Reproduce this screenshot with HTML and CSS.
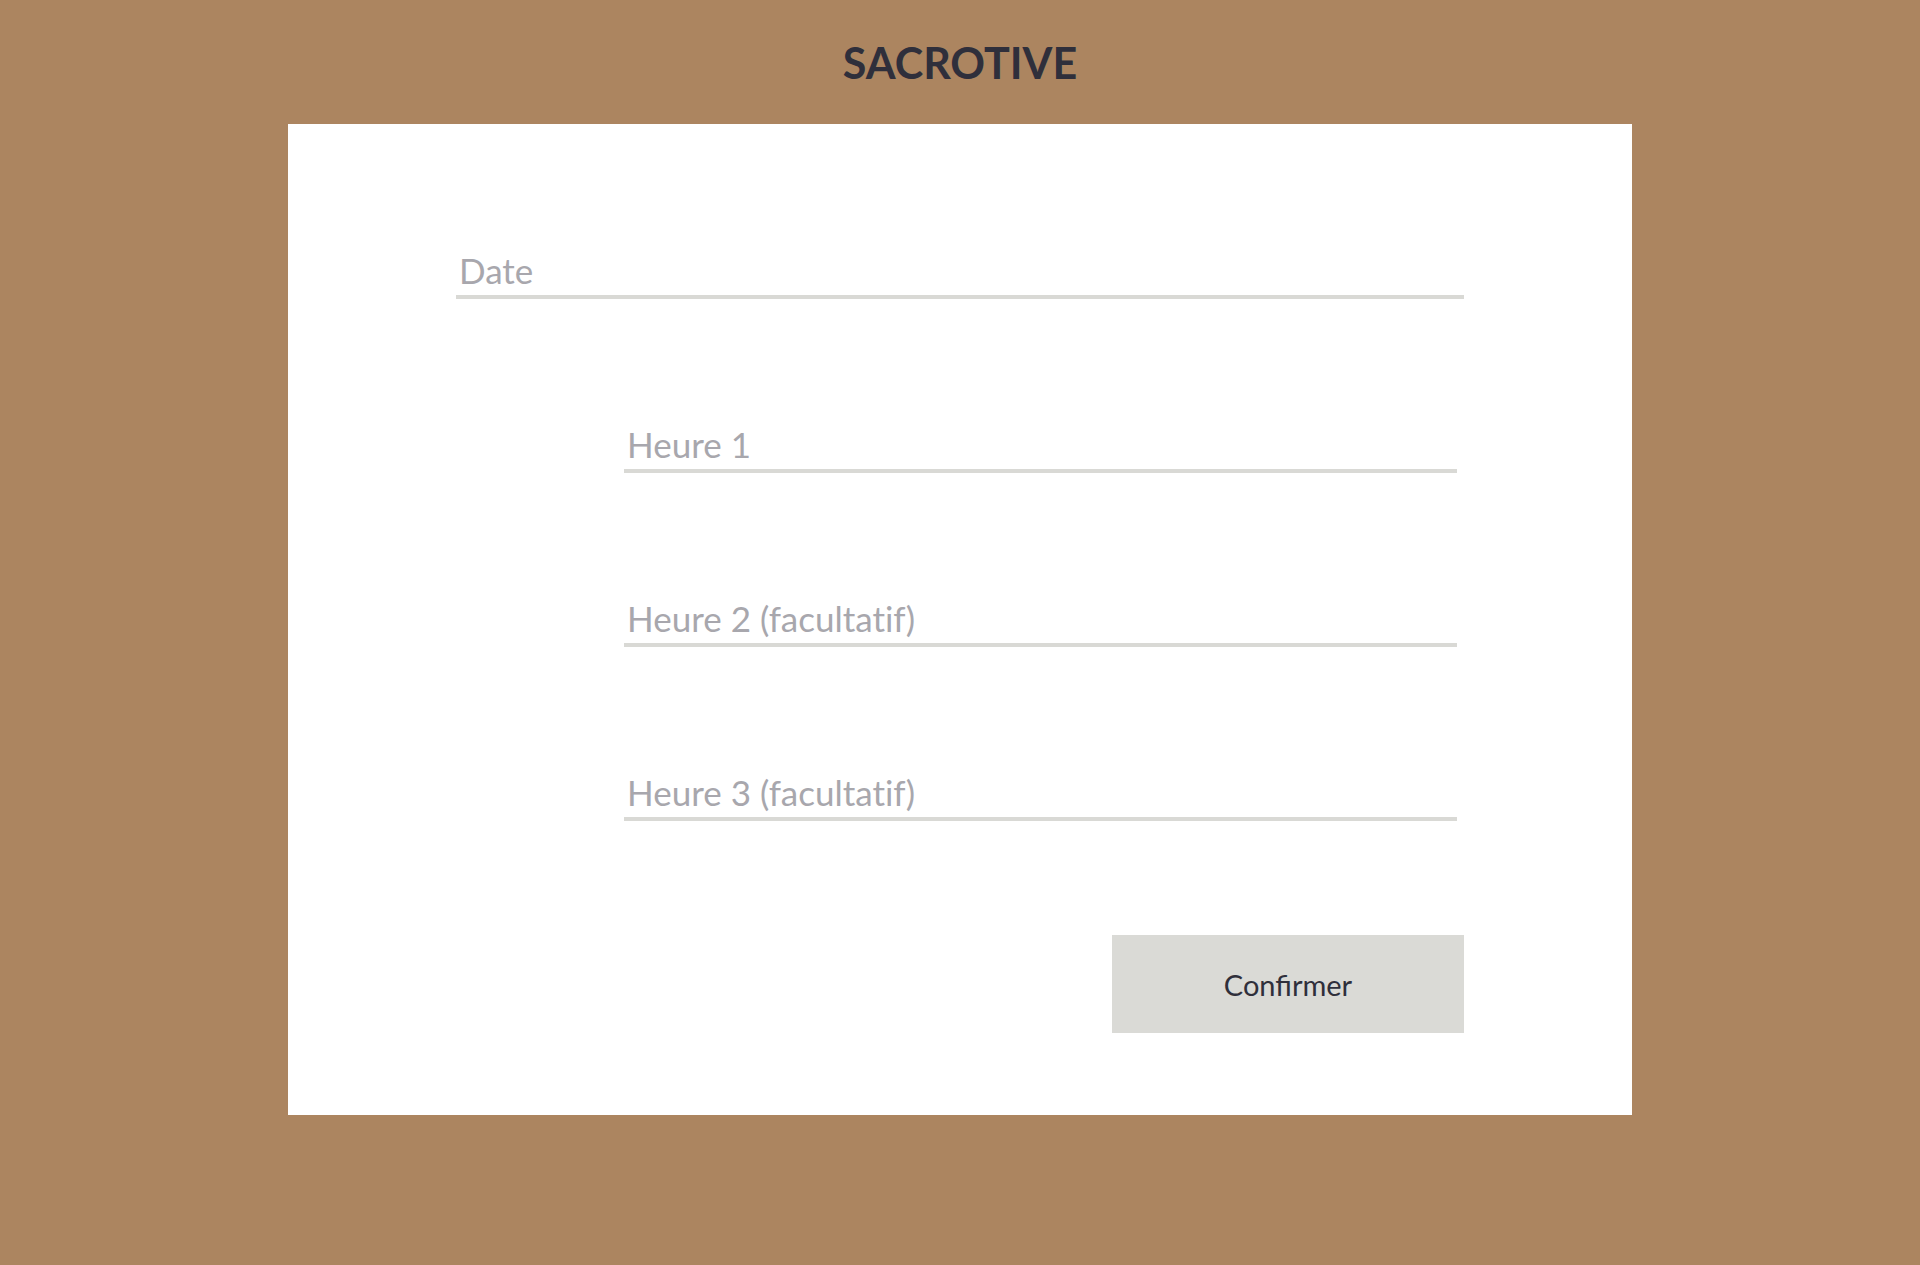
FILE: index.html
```html
<!DOCTYPE html>
<html lang="fr">
<head>
<meta charset="utf-8">
<title>SACROTIVE</title>
<link rel="stylesheet" href="styles.css">
</head>
<body>
<header class="header">
  <h1 class="title">SACROTIVE</h1>
</header>
<main class="card">
  <form class="form">
    <input class="field field-date" type="text" placeholder="Date">
    <input class="field field-time" type="text" placeholder="Heure 1">
    <input class="field field-time" type="text" placeholder="Heure 2 (facultatif)">
    <input class="field field-time" type="text" placeholder="Heure 3 (facultatif)">
    <button class="submit" type="button">Confirmer</button>
  </form>
</main>
</body>
</html>
```

FILE: styles.css
```css
html, body {
  margin: 0;
  padding: 0;
}
body {
  background: #ac8560;
  min-height: 1265px;
  font-family: Lato, "Liberation Sans", sans-serif;
  font-variant-ligatures: none;
}
.header {
  height: 124px;
  display: flex;
  align-items: center;
  justify-content: center;
}
.title {
  margin: 0;
  font-size: 43px;
  font-weight: 700;
  color: #2f2f3b;
  line-height: normal;
}
.card {
  width: 1344px;
  box-sizing: border-box;
  margin: 0 auto;
  background: #ffffff;
  padding: 121px 168px 82px;
}
.form {
  display: flex;
  flex-direction: column;
}
.field {
  display: block;
  box-sizing: content-box;
  height: 50px;
  padding: 0 0 0 3px;
  margin: 0;
  border: none;
  border-bottom: 4px solid #d9d9d5;
  background: transparent;
  font-family: Lato, "Liberation Sans", sans-serif;
  font-size: 35px;
  font-variant-ligatures: none;
  font-feature-settings: "liga" 0, "clig" 0;
  color: #2f2f3b;
  outline: none;
}
.field::placeholder {
  color: #a8a7ad;
  opacity: 1;
  font-variant-ligatures: none;
  font-feature-settings: "liga" 0, "clig" 0;
}
.field-date {
  width: 1005px;
}
.field-time {
  width: 830px;
  margin-left: 168px;
  margin-top: 120px;
}
.submit {
  align-self: flex-end;
  margin-top: 114px;
  width: 352px;
  height: 98px;
  border: none;
  background: #dadad6;
  color: #2f2f3b;
  font-family: Lato, "Liberation Sans", sans-serif;
  font-size: 29px;
  padding: 0;
  cursor: pointer;
}
```
